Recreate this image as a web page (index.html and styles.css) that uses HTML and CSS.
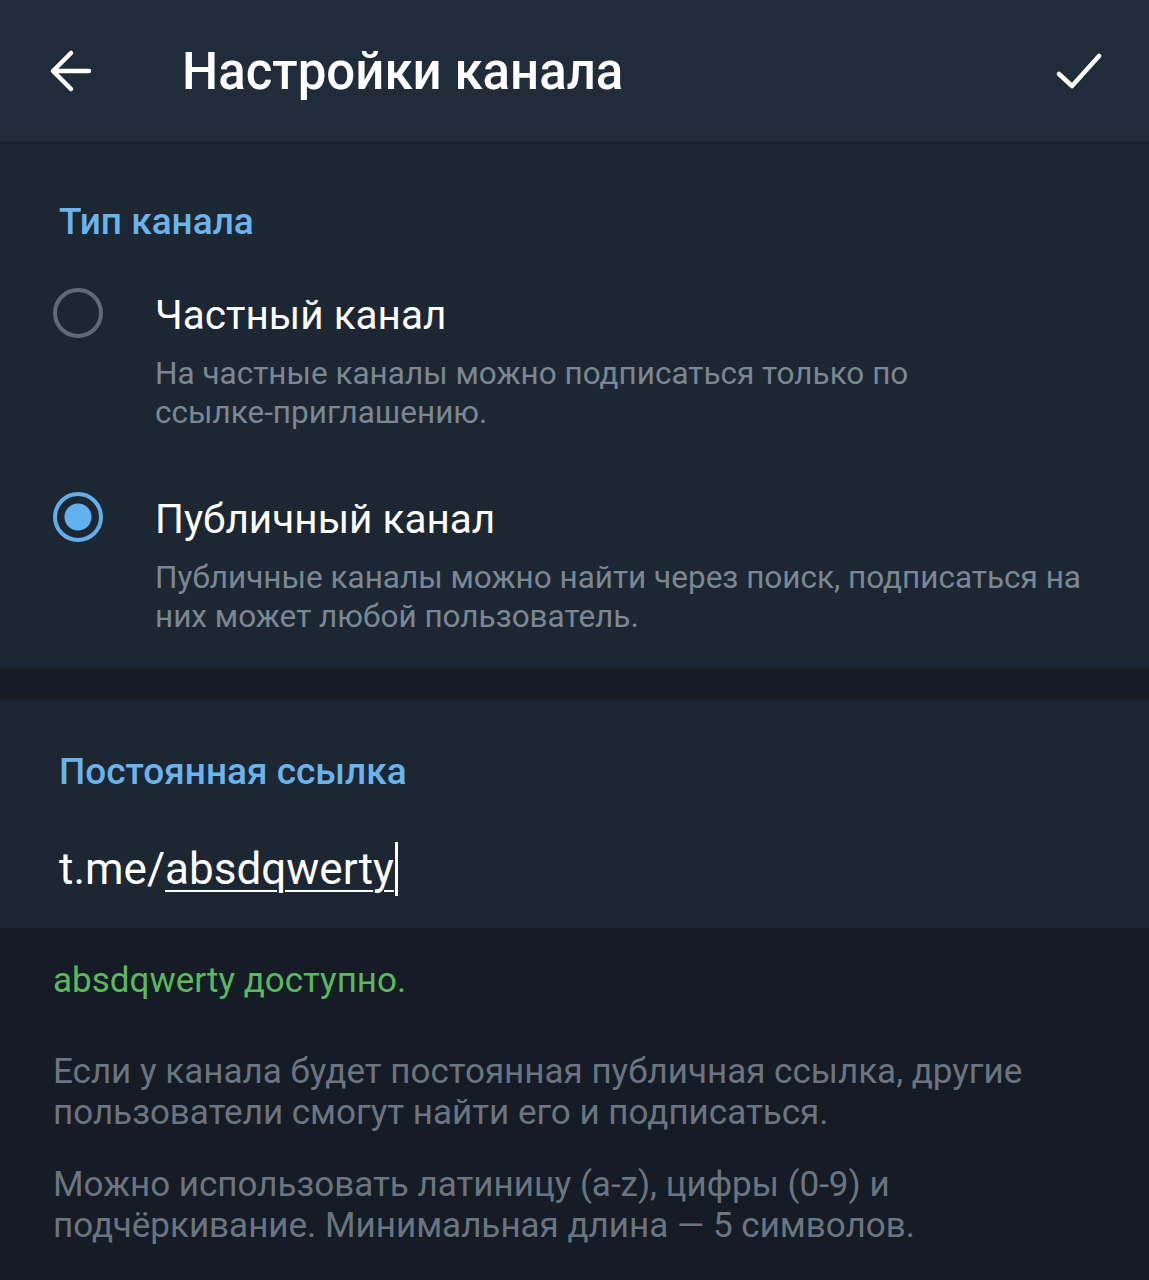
FILE: index.html
```html
<!DOCTYPE html>
<html lang="ru">

<head>
    <meta charset="UTF-8">
    <meta name="viewport" content="width=device-width, initial-scale=1.0">
    <title>Настройки канала</title>
    <link rel="stylesheet" href="styles.css">
</head>

<body>
    <header class="topbar">
        <svg class="icon back" width="48" height="48" viewBox="0 0 48 48">
            <path d="M42 24H8M24 6L6 24l18 18" fill="none" stroke="#fff" stroke-width="4.5" stroke-linecap="round" stroke-linejoin="round"/>
        </svg>
        <h1 class="title">Настройки канала</h1>
        <svg class="icon done" width="48" height="48" viewBox="0 0 48 48">
            <path d="M5 27l13 12L45 9" fill="none" stroke="#fff" stroke-width="4.5" stroke-linecap="round" stroke-linejoin="round"/>
        </svg>
    </header>

    <section class="card type">
        <h2 class="caption">Тип канала</h2>

        <div class="option">
            <span class="radio"></span>
            <div class="option-text">
                <p class="option-title">Частный канал</p>
                <p class="option-desc">На частные каналы можно подписаться только по<br>ссылке-приглашению.</p>
            </div>
        </div>

        <div class="option">
            <span class="radio checked"></span>
            <div class="option-text">
                <p class="option-title">Публичный канал</p>
                <p class="option-desc">Публичные каналы можно найти через поиск, подписаться на<br>них может любой пользователь.</p>
            </div>
        </div>
    </section>

    <section class="card link">
        <h2 class="caption">Постоянная ссылка</h2>
        <p class="link-input">t.me/<span class="link-name">absdqwerty</span><span class="cursor"></span></p>
    </section>

    <div class="hints">
        <p class="available">absdqwerty доступно.</p>
        <p class="hint">Если у канала будет постоянная публичная ссылка, другие<br>пользователи смогут найти его и подписаться.</p>
        <p class="hint">Можно использовать латиницу (a-z), цифры (0-9) и<br>подчёркивание. Минимальная длина — 5 символов.</p>
    </div>
</body>

</html>
```

FILE: styles.css
```css
body {
    margin: 0;
    font-family: Roboto, "Noto Sans", sans-serif;
    background-color: #151c25;
    color: #fff;
    height: 1280px;
    overflow: hidden;
}

p, h1, h2 {
    margin: 0;
}

.topbar {
    display: flex;
    align-items: center;
    height: 142px;
    padding: 0 47px 0 47px;
    background-color: #212c3a;
    border-bottom: 2px solid #19222d;
}

.icon {
    flex: none;
}

.back {
    margin-right: 87px;
}

.done {
    margin-left: auto;
}

.title {
    font-size: 51px;
    font-weight: 500;
}

.card {
    background-color: #1d2733;
}

.caption {
    color: #6ab3ec;
    font-size: 37px;
    font-weight: 500;
    line-height: 40px;
    padding-left: 59px;
}

.type {
    padding: 58px 0 32px;
}

.option {
    display: flex;
    margin-top: 48px;
}

.option + .option {
    margin-top: 62px;
}

.radio {
    flex: none;
    box-sizing: border-box;
    width: 50px;
    height: 50px;
    margin: -2px 52px 0 53px;
    border: 4.5px solid #5e6a76;
    border-radius: 50%;
}

.radio.checked {
    border-color: #61aee8;
    background: radial-gradient(circle, #62b1ec 0 13px, transparent 14px);
}

.option-title {
    font-size: 40.5px;
    line-height: 50px;
}

.option-desc {
    margin-top: 14px;
    color: #7b8793;
    font-size: 31.5px;
    line-height: 39px;
}

.link {
    margin-top: 32px;
    height: 228px;
    padding-top: 52px;
    box-sizing: border-box;
}

.link-input {
    padding-left: 59px;
    margin-top: 50px;
    font-size: 44px;
    line-height: 48px;
}

.link-name {
    text-decoration: underline;
    text-decoration-thickness: 2px;
    text-underline-offset: 6px;
}

.cursor {
    display: inline-block;
    width: 3px;
    height: 54px;
    margin-left: 1px;
    vertical-align: -12px;
    background-color: #fff;
}

.hints {
    padding: 33px 53px 0;
}

.available {
    color: #5cb85f;
    font-size: 35px;
    line-height: 40px;
}

.hint {
    margin-top: 49.5px;
    color: #6b7581;
    font-size: 35px;
    line-height: 41px;
}

.hint + .hint {
    margin-top: 31px;
}
```
